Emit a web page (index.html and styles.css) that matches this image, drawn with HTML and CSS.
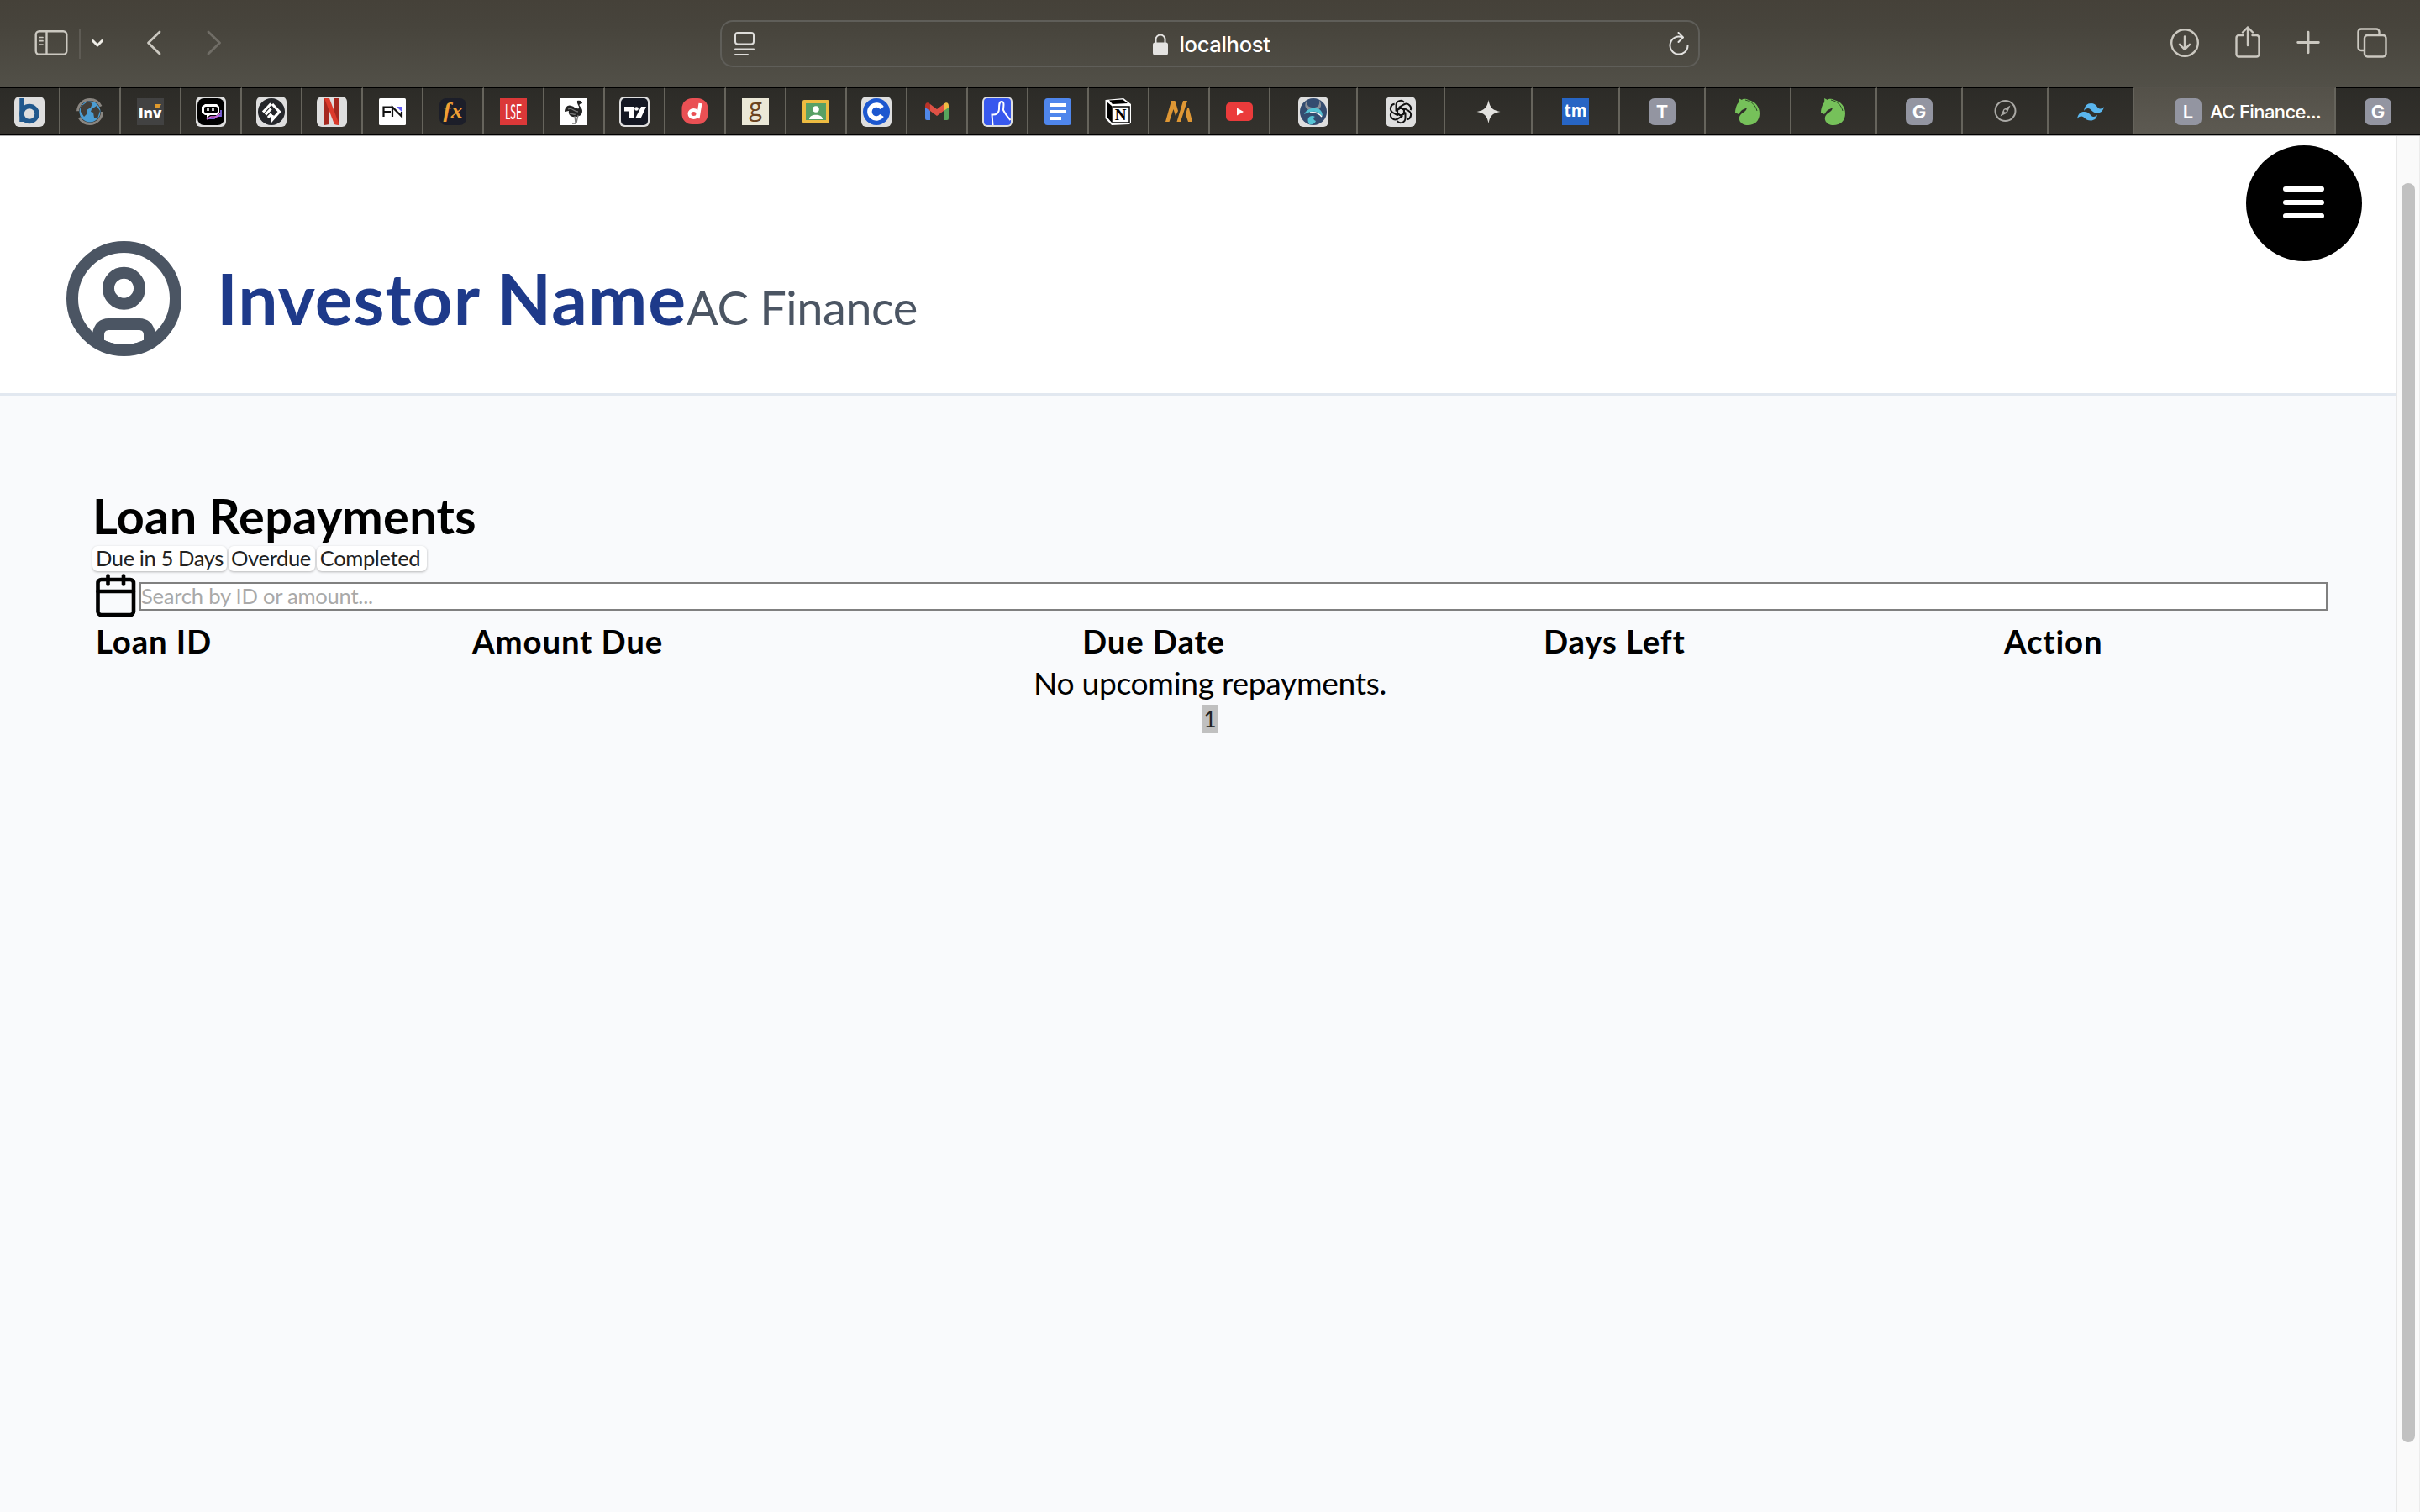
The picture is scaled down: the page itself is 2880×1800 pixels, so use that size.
FILE: index.html
```html
<!DOCTYPE html>
<html lang="en">
<head>
<meta charset="utf-8">
<title>AC Finance</title>
<link rel="stylesheet" href="styles.css">
</head>
<body>
<div class="toolbar">
  <div class="tools-left">
    <svg class="ic-sidebar" width="40" height="32" viewBox="0 0 40 32" fill="none" stroke="#cbc8c0" stroke-width="2.4" stroke-linecap="round"><rect x="1.7" y="2.2" width="36.600" height="27.600" rx="4"/><path d="M14.500 2.500v27"/><path d="M6 9.500h4M6 13.700h4M6 18h4" stroke-width="1.700"/></svg>
    <span class="tool-sep"></span>
    <svg class="ic-down" width="16" height="12" viewBox="0 0 16 12" fill="none" stroke="#f0eee8" stroke-width="3" stroke-linecap="round" stroke-linejoin="round"><path d="M2.500 3.500 8 9l5.500-5.500"/></svg>
    <svg class="ic-back" width="18" height="30" viewBox="0 0 18 30" fill="none" stroke="#cbc8c0" stroke-width="2.800" stroke-linecap="round" stroke-linejoin="round"><path d="M16 2 2.500 15 16 28"/></svg>
    <svg class="ic-fwd" width="18" height="30" viewBox="0 0 18 30" fill="none" stroke="#706d66" stroke-width="2.800" stroke-linecap="round" stroke-linejoin="round"><path d="M2 2l13.500 13L2 28"/></svg>
  </div>
  <div class="address">
    <svg width="24" height="30" viewBox="0 0 24 30" fill="none" stroke="#dddcd9" stroke-width="2" stroke-linecap="round"><rect x="1" y="2" width="22" height="13.500" rx="3"/><path d="M1 21.500h22M1 28h15"/></svg>
    <div class="host">
      <svg width="18" height="26" viewBox="0 0 18 26"><rect y="10.500" width="18" height="15" rx="2.500" fill="#e4e3e1"/><path d="M3.500 11.500V7a5.500 5.500 0 0 1 11 0v4.500" fill="none" stroke="#e4e3e1" stroke-width="2"/></svg>
      <span>localhost</span>
    </div>
    <svg width="24" height="28" viewBox="0 0 24 28" fill="none" stroke="#e4e3e1" stroke-width="2" stroke-linecap="round" stroke-linejoin="round"><path d="M22.500 16A10.500 10.500 0 1 1 16 6.400M11.500 1l5.500 5.500-5.500 5.500"/></svg>
  </div>
  <div class="tools-right">
    <svg width="34" height="40" viewBox="0 0 34 40" fill="none" stroke="#cbc8c0" stroke-width="2.400" stroke-linecap="round" stroke-linejoin="round"><circle cx="17" cy="20" r="15.800"/><path d="M17 12.500v15M11 21.800l6 6 6-6"/></svg>
    <svg width="30" height="40" viewBox="0 0 30 40" fill="none" stroke="#cbc8c0" stroke-width="2.400" stroke-linecap="round" stroke-linejoin="round"><path d="M9.500 11H4.500a3 3 0 0 0-3 3v19.500a3 3 0 0 0 3 3h21a3 3 0 0 0 3-3V14a3 3 0 0 0-3-3h-5M15 23V1.500M9 7.500l6-6 6 6"/></svg>
    <svg width="28" height="40" viewBox="0 0 28 40" fill="none" stroke="#cbc8c0" stroke-width="2.900" stroke-linecap="round"><path d="M14 7.200v24.600M1.700 19.500h24.600"/></svg>
    <svg width="36" height="40" viewBox="0 0 36 40" fill="none" stroke="#cbc8c0" stroke-width="2.400"><rect x="9" y="11" width="25.500" height="25.500" rx="3.500"/><path d="M8 29H5a3.500 3.500 0 0 1-3.500-3.500V7A3.500 3.500 0 0 1 5 3.500h18A3.500 3.500 0 0 1 26.500 7v3"/></svg>
  </div>
</div>

<div class="tabs">
  <div class="tab"><svg viewBox="0 0 36 36"><rect width="36" height="36" rx="6" fill="#dedede"/><path d="M9 2v28" stroke="#20588d" stroke-width="5.500"/><circle cx="18" cy="20.500" r="9" fill="none" stroke="#20588d" stroke-width="5.500"/></svg></div>
  <div class="tab"><svg viewBox="0 0 36 36"><circle cx="18" cy="18" r="14.500" fill="none" stroke="#8a8681" stroke-width="3" stroke-dasharray="38 8"/><circle cx="18" cy="18" r="12.500" fill="#4b9dd3"/><path d="M7 12l8-6 6 2-2 5-5 3 1 4-4 4-4-6zM20 15l6-4 4 6-3 9-4-1-1-6-3-1z" fill="#423e38"/></svg></div>
  <div class="tab"><svg viewBox="0 0 36 36"><rect x="2" y="2" width="32" height="32" fill="#424242"/><text x="17.500" y="26" class="t-inv">Inv</text><path d="M24 9h7l-3 5h-4z" fill="#e09a2c"/></svg></div>
  <div class="tab"><svg viewBox="0 0 36 36"><rect width="36" height="36" rx="6" fill="#dedede"/><rect x="2" y="2" width="32" height="32" rx="8" fill="#000"/><path d="M30 16v7h-5l-3 3h-7" fill="none" stroke="#7b63e0" stroke-width="1.800"/><path d="M13 27l5-3h7l4-4" fill="none" stroke="#d96bd8" stroke-width="1.500"/><path d="M11 9h14l3 3v7l-3 3h-8l-4 3v-3h-2l-4-3v-7z" fill="#fff"/><rect x="10" y="12" width="16" height="7.500" rx="2" fill="#000"/><path d="M14.500 14v3M20.500 14v3" stroke="#fff" stroke-width="2.500"/></svg></div>
  <div class="tab"><svg viewBox="0 0 36 36"><rect width="36" height="36" rx="6" fill="#dedede"/><circle cx="18" cy="18" r="16" fill="#25272b"/><path d="M19 9l8.500 9-8.500 9.500V22M8 18.500 17.500 8.500M11 21.500l6.500-7M14 25l4-4.500" fill="none" stroke="#fff" stroke-width="3.200"/></svg></div>
  <div class="tab"><svg viewBox="0 0 36 36"><rect width="36" height="36" rx="6" fill="#dedede"/><path d="M9 2h6v31l-6 1zM21 2h6v32l-6-1z" fill="#a5281f"/><path d="M9 2h6l12 32-6-1z" fill="#dc3a2b"/></svg></div>
  <div class="tab"><svg viewBox="0 0 36 36"><rect x="2" y="2" width="32" height="32" rx="1.500" fill="#fff"/><path d="M7.500 24V12.500H17M7.500 18H16M18 24V12.500l11 11V18" fill="none" stroke="#111" stroke-width="2.200"/><path d="M23 12h7v7z" fill="#615cf5"/></svg></div>
  <div class="tab"><svg viewBox="0 0 36 36"><rect x="2" y="2" width="32" height="32" rx="8" fill="#1c1e29"/><text x="18" y="25" class="t-fx" textLength="23" lengthAdjust="spacingAndGlyphs">fx</text></svg></div>
  <div class="tab"><svg viewBox="0 0 36 36"><rect x="2" y="2" width="32" height="32" fill="#db3838"/><text x="8" y="27" class="t-lse" textLength="20" lengthAdjust="spacingAndGlyphs">LSE</text></svg></div>
  <div class="tab"><svg viewBox="0 0 36 36"><rect x="2" y="2" width="32" height="32" fill="#fff"/><path d="M22 5c4-1 6 1 6 3l-3 1c-2 2 3 4 3 8 0 5-4 7-8 7-6 1-9-3-8-7l-5 1c0-5 4-9 8-7 4 1 5 4 9 3 1-3-3-5-2-9z" fill="#222"/><path d="M19 23l1 9h-4M23 22l-2 9M11 15c5-3 6 3 12 3M13 20c3 0 4 2 7 1" fill="none" stroke="#777" stroke-width="1.300"/></svg></div>
  <div class="tab"><svg viewBox="0 0 36 36"><rect width="36" height="36" rx="6" fill="#dedede"/><rect x="2" y="2" width="32" height="32" rx="5" fill="#131722"/><path d="M6 12h11v14h-5v-8.500H6zM26 12h6l-6.500 14H19z" fill="#fff"/><circle cx="20.500" cy="14.500" r="2.300" fill="#fff"/></svg></div>
  <div class="tab"><svg viewBox="0 0 36 36"><rect x="2.500" y="2" width="31" height="31" rx="12" fill="#ea5054"/><path d="M24.500 8 21.500 26" fill="none" stroke="#fff" stroke-width="4"/><ellipse cx="16.500" cy="20.500" rx="5" ry="4.500" fill="none" stroke="#fff" stroke-width="4"/></svg></div>
  <div class="tab"><svg viewBox="0 0 36 36"><rect x="2" y="2" width="32" height="32" fill="#ebe8d7"/><text x="18" y="23" class="t-good">g</text></svg></div>
  <div class="tab"><svg viewBox="0 0 36 36"><rect x="2" y="4" width="32" height="28" rx="2" fill="#edbb41"/><rect x="6" y="8" width="24" height="20" fill="#58a065"/><circle cx="18" cy="15" r="3.800" fill="#fff"/><path d="M10 27c0-7 16-7 16 0z" fill="#fff"/></svg></div>
  <div class="tab"><svg viewBox="0 0 36 36"><rect width="36" height="36" rx="6" fill="#dedede"/><circle cx="18" cy="18" r="16" fill="#1c57cf"/><path d="M24.500 13.500a8 8 0 1 0 0 9" fill="none" stroke="#fff" stroke-width="5.500"/></svg></div>
  <div class="tab"><svg viewBox="0 0 36 36"><path d="M4 11l6 4v13H6a2 2 0 0 1-2-2z" fill="#5088e8"/><path d="M32 11l-6 4v13h4a2 2 0 0 0 2-2z" fill="#56a45c"/><path d="M10 9l8 6 8-6v8l-8 6-8-6z" fill="#de5145"/><path d="M4 11c0-4 3-5 6-2v8l-6-4z" fill="#b83329"/><path d="M32 11c0-4-3-5-6-2v8l6-4z" fill="#eebb43"/></svg></div>
  <div class="tab"><svg viewBox="0 0 36 36"><rect width="36" height="36" rx="6" fill="#dedede"/><rect x="2" y="2" width="32" height="32" rx="4" fill="#3758ee"/><path d="M12.500 34 11.500 21.500C17 22 20 19 20 15c0-5 0-9 3-9 4 0 2 6 2 10 2 4 5 8 8.500 12" fill="none" stroke="#fff" stroke-width="2"/></svg></div>
  <div class="tab"><svg viewBox="0 0 36 36"><rect x="2" y="2" width="32" height="32" rx="3.500" fill="#4f86ec"/><path d="M8 10h20M8 18h20M8 26h14" stroke="#fff" stroke-width="4"/></svg></div>
  <div class="tab"><svg viewBox="0 0 36 36"><path d="M2.500 4 24 2l9 7v22l-2 2-21 1-7.500-8z" fill="#fff"/><path d="M4 6l6 5v20l-6-7zM7 4.500 23 3.500l6 4.500-18 1z" fill="#000"/><rect x="11" y="12" width="20" height="19" fill="#fff" stroke="#000" stroke-width="1.500"/><text x="20.500" y="27.500" class="t-notion">N</text></svg></div>
  <div class="tab"><svg viewBox="0 0 36 36"><path d="M2 30 9 5h4.500L17 17l-3 6-2.500-8L6.500 30zM15.500 30 23 5h5l-8 25zM28 14h2l4 16h-5l-3-9z" fill="#df9734"/></svg></div>
  <div class="tab"><svg viewBox="0 0 36 36"><rect x="2" y="7" width="32" height="22" rx="5" fill="#eb3b3b"/><path d="M15 13.500v9l8-4.500z" fill="#fff"/></svg></div>

  <div class="tab wide"><svg viewBox="0 0 36 36"><rect width="36" height="36" rx="6" fill="#dedede"/><circle cx="18" cy="18" r="16" fill="#344c70"/><path d="M10 5c0 7 4 8 8 8 5 0 8-2 7-9 4 6 2 11-3 12H13C8 14 7 10 10 5z" fill="#8b8e96"/><path d="M7 21c3-6 9-8 14-7 5 0 8 4 8 9-3-1-4-4-8-5-6-1-9 1-14 3z" fill="#55c3d4"/><path d="M13 33c-4-7 1-12 7-9-3 1-2 4 1 5-1 3-4 5-8 4z" fill="#55c3d4"/><path d="M14 19c6-1 11 1 14 5" stroke="#fff" stroke-width="1.500" fill="none"/></svg></div>
  <div class="tab wide"><svg viewBox="0 0 36 36"><rect width="36" height="36" rx="6" fill="#dedede"/><g fill="none" stroke="#111" stroke-width="2" stroke-linejoin="round"><g id="petal"><path d="M18 13.500 12.500 16.700V10a5.500 5.500 0 0 1 9.800-3"/></g><use href="#petal" transform="rotate(60 18 18)"/><use href="#petal" transform="rotate(120 18 18)"/><use href="#petal" transform="rotate(180 18 18)"/><use href="#petal" transform="rotate(240 18 18)"/><use href="#petal" transform="rotate(300 18 18)"/><path d="M18 13.400l4 2.300v4.600l-4 2.300-4-2.300v-4.600z"/></g></svg></div>
  <div class="tab wide"><svg viewBox="0 0 36 36"><path d="M18.500 4c1.500 9 5 12.500 14 14-9 1.500-12.500 5-14 14-1.500-9-5-12.500-14-14 9-1.500 12.500-5 14-14z" fill="#e3e2df"/></svg></div>
  <div class="tab wide"><svg viewBox="0 0 36 36"><rect x="2" y="2" width="32" height="32" fill="#2765c4"/><text x="18" y="24" class="t-tm" textLength="27" lengthAdjust="spacingAndGlyphs">tm</text></svg></div>
  <div class="tab mid"><span class="letter">T</span></div>
  <div class="tab mid"><svg viewBox="0 0 36 36"><path id="horse" d="M7 2l4 2c2-2 5-1 8 0 8 2 13 8 13 16 0 9-6 14-14 14-9 0-13-8-8-13 3-3 6-3 7-8-3 2-5 2-7 4l-3 4-4-2c0-4 1-6 2-9 1-2 3-3 2-8z" fill="#76c15a"/><path d="M15 4c8 2 12 6 14 13" fill="none" stroke="#2e4a28" stroke-width="1"/></svg></div>
  <div class="tab mid"><svg viewBox="0 0 36 36"><use href="#horse"/><path d="M15 4c8 2 12 6 14 13" fill="none" stroke="#2e4a28" stroke-width="1"/></svg></div>
  <div class="tab mid"><span class="letter bold">G</span></div>
  <div class="tab mid"><svg viewBox="0 0 36 36"><circle cx="18.500" cy="17" r="12" fill="none" stroke="#aaa9a5" stroke-width="2"/><path d="M24.500 10.500l-3.800 9-8.200 4 4-8.500z" fill="#aaa9a5"/><circle cx="18.500" cy="17" r="1.500" fill="#32302c"/></svg></div>
  <div class="tab mid"><svg viewBox="0 0 36 36"><path d="M10 17c1-6 4-9 8.500-9 7 0 7 6.500 11 6.500 2 0 3.500-1 4.500-2.500-1 5-4 7.500-8 7.500-6.500 0-7.500-5.500-11-5.500-2 0-4 1-5 3zM2 26.500c1-6 4-8.500 8.500-8.500 7 0 7 6 11 6 2 0 3.500-1 4.500-2.500-1 5-4 7-8 7-6.500 0-7.500-5-11-5-2 0-4 1-5 3z" fill="#5ab6ee"/></svg></div>
  <div class="tab active"><span class="letter">L</span><span class="tab-title">AC Finance...</span></div>
  <div class="tab last"><span class="letter bold">G</span></div>
</div>

<div class="viewport">
  <div class="page">
    <header class="header">
      <svg class="avatar" width="137" height="137" viewBox="0 0 137 137"><g fill="none" stroke="#4b5563" stroke-width="14"><circle cx="68.500" cy="68.500" r="61.500"/><circle cx="68.500" cy="56.200" r="18.500"/></g><path fill="#4b5563" fill-rule="evenodd" d="M31 110C33 98 40 92 50 92h37c10 0 17 6 19 18l-12 16H43zM51 106c-4 0-6 2-6 6v6c14 7 33 7 47 0v-6c0-4-2-6-6-6z"/></svg>
      <div class="names"><span class="investor">Investor Name</span><span class="company">AC Finance</span></div>
      <button class="menu" aria-label="Menu"><span></span><span></span><span></span></button>
    </header>
    <main class="content">
      <h1>Loan Repayments</h1>
      <div class="filters"><button class="due">Due in 5 Days</button><button class="over">Overdue</button><button class="done">Completed</button></div>
      <div class="search">
        <svg width="48" height="52" viewBox="0 0 48 52" fill="none" stroke="#000" stroke-width="4.600" stroke-linecap="round"><rect x="2.500" y="7" width="42.500" height="42" rx="4"/><path d="M2.500 21h42.500M14.500 2.500v10M33 2.500v10"/></svg>
        <input type="text" placeholder="Search by ID or amount...">
      </div>
      <div class="thead"><span>Loan ID</span><span>Amount Due</span><span>Due Date</span><span>Days Left</span><span>Action</span></div>
      <p class="empty">No upcoming repayments.</p>
      <div class="pager"><button>1</button></div>
    </main>
  </div>
  <div class="scrollbar"><div class="thumb"></div></div>
</div>
</body>
</html>
```
FILE: styles.css
```css
* { box-sizing: border-box; }
body {
  margin: 0;
  width: 2880px;
  height: 1800px;
  overflow: hidden;
  display: flex;
  flex-direction: column;
  font-family: Lato, sans-serif;
  color: #000;
  background: #f9fafc;
}
svg { display: block; flex: none; }
button { border: 0; padding: 0; margin: 0; font-family: inherit; color: inherit; }

/* Browser toolbar */
.toolbar {
  height: 104px;
  flex: none;
  display: flex;
  align-items: flex-start;
  background: linear-gradient(#454139 0%, #47443c 30%, #525048 100%);
}
.tools-left { width: 857px; height: 102px; display: flex; align-items: center; padding-left: 41px; }
.tool-sep { width: 2px; height: 36px; background: #5e5b54; margin: 2px 0 0 13px; }
.ic-down { margin-left: 12px; }
.ic-back { margin-left: 50px; }
.ic-fwd { margin-left: 54px; }
.address {
  width: 1166px;
  height: 56px;
  margin-top: 24px;
  padding: 0 11px 0 15px;
  border: 2px solid #5f5e59;
  border-radius: 15px;
  display: flex;
  align-items: center;
  justify-content: space-between;
}
.host {
  display: flex;
  align-items: center;
  gap: 13px;
  padding-top: 1px;
  font: 500 25.600px/50px Inter, sans-serif;
  letter-spacing: -.35px;
  color: #fff;
}
.tools-right { display: flex; gap: 43px; padding: 31px 0 0 560px; }
.tools-right svg:last-child { margin-left: 1px; }

/* Tab strip */
.tabs {
  height: 57px;
  flex: none;
  display: flex;
  background: linear-gradient(#2c2b27, #34322d);
  border-bottom: 1px solid #000;
}
.tab {
  width: 72px;
  height: 56px;
  flex: none;
  display: flex;
  align-items: center;
  justify-content: center;
  border-right: 2px solid #66645c;
  border-top: 1px solid #000;
}
.tab svg { width: 36px; height: 36px; }
.wide { width: 104px; }
.mid { width: 102px; }
.active {
  width: 240px;
  justify-content: flex-start;
  padding-left: 48px;
  gap: 10px;
  border-top-color: #55524b;
  background: linear-gradient(#545149, #5d5a52);
}
.last { width: 100px; border-right: 0; }
.letter {
  width: 32px;
  height: 32px;
  border-radius: 7px;
  background: #9395a1;
  color: #fff;
  font: 600 22px/33px Inter, sans-serif;
  text-align: center;
}
.bold { font-weight: 700; }
.tab-title { font: 500 22px/32px Inter, sans-serif; color: #fff; white-space: nowrap; letter-spacing: -.6px; }
.tab text { fill: #fff; text-anchor: middle; }
.tab .t-inv { font: 800 17px "Open Sans", sans-serif; }
.tab .t-fx { font: italic 700 26px "Liberation Serif", serif; fill: #f0a034; }
.tab .t-lse { font: 400 25px Lato, sans-serif; text-anchor: start; }
.tab .t-good { font: 400 29px "Open Sans", sans-serif; fill: #6b4420; }
.tab .t-notion { font: 700 19px "Liberation Serif", serif; fill: #000; }
.tab .t-tm { font: 700 21px "Open Sans", sans-serif; }

/* Web page */
.viewport { flex: 1; display: flex; border-top: 1px solid #aaa; min-height: 0; }
.page { flex: 1; }
.header {
  height: 310px;
  background: #fff;
  border-bottom: 4px solid #e2e8f0;
  display: flex;
  align-items: flex-start;
}
.avatar { margin: 125px 0 0 79px; }
.names {
  margin: 143px 0 0 42px;
  display: flex;
  align-items: baseline;
  line-height: 100px;
  white-space: nowrap;
}
.investor { font-size: 84px; font-weight: 700; color: #1e3a8a; letter-spacing: 1px; }
.company { font-size: 56px; color: #4b5563; letter-spacing: -.5px; }
.menu {
  width: 138px;
  height: 138px;
  margin: 11px 40px 0 auto;
  padding: 0 1px 2px 0;
  border-radius: 50%;
  background: #000;
  display: flex;
  flex-direction: column;
  align-items: center;
  justify-content: center;
  gap: 10px;
}
.menu span { width: 49px; height: 6px; border-radius: 3px; background: #fff; }
.content { padding: 107px 81px 0 110px; }
h1 { margin: 0; font-size: 57.600px; line-height: 70px; height: 70px; font-weight: 700; letter-spacing: .3px; }
.filters { display: flex; height: 33px; gap: 2px; padding-top: 1px; }
.filters button {
  height: 30px;
  border-radius: 6px;
  background: #fff;
  color: #222;
  font-size: 25.600px;
  line-height: 27px;
  padding-bottom: 2px;
  letter-spacing: -.42px;
  box-shadow: 0 1px 3px rgba(0, 0, 0, .28);
  white-space: nowrap;
}
.due { width: 160px; }
.filters .over { width: 103px; padding-right: 2px; }
.filters .done { width: 131px; padding-right: 4px; }
.search { display: flex; align-items: center; height: 54px; padding-left: 4px; gap: 4px; }
.search input {
  flex: 1;
  height: 34px;
  margin-top: 1px;
  padding: 0 0 1px;
  border: 2px solid #808080;
  background: #fff;
  font: 400 25.600px/29px Lato, sans-serif;
  letter-spacing: -.25px;
  outline: 0;
}
.search input::placeholder { color: #a9a9a9; opacity: 1; }
.thead {
  display: grid;
  grid-template-columns: 448px 726px 549px 548px 1fr;
  padding: 3px 0 0 4px;
  font-size: 38.400px;
  line-height: 49px;
  font-weight: 700;
  letter-spacing: .85px;
}
.empty { margin: 0; text-align: center; font-size: 37.200px; line-height: 50px; letter-spacing: -.3px; }
.pager { display: flex; justify-content: center; padding-top: 1px; }
.pager button { width: 18px; height: 34px; background: #c0c0c0; color: #222; font-size: 26px; line-height: 34px; }
.scrollbar {
  width: 29px;
  background: #fafafa;
  border-left: 2px solid #e8e8e8;
  border-right: 1px solid #ececec;
  padding: 56px 0 0 5px;
}
.thumb { width: 16px; height: 1499px; border-radius: 8px; background: #c1c1c1; }
```
